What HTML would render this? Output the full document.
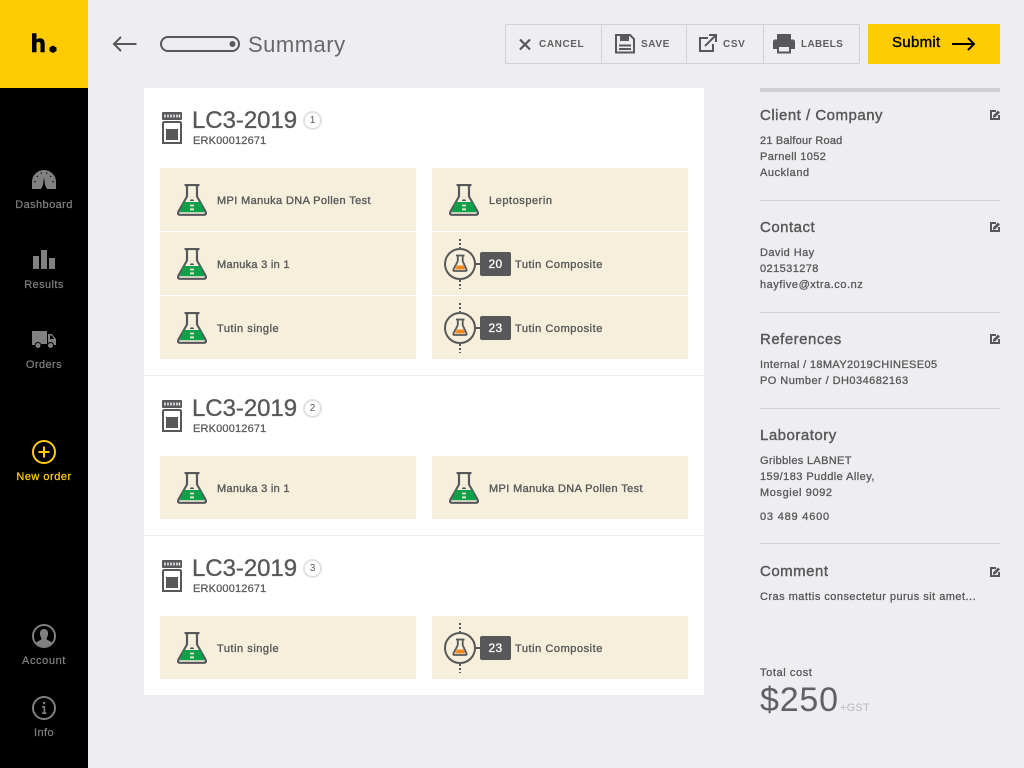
<!DOCTYPE html>
<html><head><meta charset="utf-8"><style>
html,body{margin:0;padding:0;width:1024px;height:768px;overflow:hidden;background:#eeeef0;font-family:"Liberation Sans",sans-serif;color:#58585a}
div{position:absolute;white-space:nowrap}
svg{position:absolute;overflow:visible}
.n{width:88px;left:0;text-align:center;font-size:11px;line-height:14px;color:#808082;letter-spacing:.42px;margin-top:1px;-webkit-text-stroke:.2px #808082}
.tile{background:#f5efdc;width:256px;height:63px}
.t{font-size:11px;line-height:14px;margin-top:1px;-webkit-text-stroke:.35px #58585a}
.h{font-size:24px;line-height:28px;letter-spacing:-.05px;margin-top:1px;-webkit-text-stroke:.35px #58585a}
.erk{font-size:11px;line-height:14px;letter-spacing:.17px;margin-top:1px;-webkit-text-stroke:.25px #58585a}
.badge{width:15px;height:15px;border:2px solid #e2e2e2;border-radius:50%;font-size:10px;line-height:15px;text-align:center;color:#58585a}
.num{width:31px;height:24px;background:#58585a;border-radius:2px;color:#fff;font-size:12px;line-height:24px;text-align:center;-webkit-text-stroke:.3px #fff;letter-spacing:.3px}
.tb{font-size:10px;line-height:14px;font-weight:bold;letter-spacing:.6px;color:#606062;margin-top:1px}
.sh{font-size:15px;line-height:20px;left:760px;letter-spacing:.5px;margin-top:1px;-webkit-text-stroke:.4px #58585a}
.st{font-size:11px;line-height:16px;left:760px;margin-top:1px;-webkit-text-stroke:.3px #58585a}
.hr{left:760px;width:240px;height:1px;background:#cfcfd1}
</style></head><body>
<svg width="0" height="0" style="position:absolute"><defs>
<symbol id="fl" viewBox="0 0 31 33">
<path d="M7.500 1H22.500M10 1V12.500L1.500 27.500Q.2 30.800 3 30.800H27Q29.800 30.800 28.500 27.500L20 12.500V1" fill="none" stroke="#58585a" stroke-width="2.200" stroke-linejoin="round"/>
<path d="M6.500 18H23.500L27.500 28.300H2.500Z" fill="#0e9f4a"/>
<rect x="13" y="15.500" width="4" height="1.500" fill="#58585a"/>
<rect x="13" y="20.600" width="4" height="1.800" fill="#f5efdc"/><rect x="13" y="24.500" width="4" height="1.800" fill="#f5efdc"/>
</symbol>
<symbol id="cf" viewBox="0 0 38 54">
<path d="M16 2V11M16 43V52" stroke="#58585a" stroke-width="2" stroke-dasharray="2 2" fill="none"/>
<circle cx="16" cy="27" r="15" fill="none" stroke="#58585a" stroke-width="2"/>
<path d="M12 18.500H20.500M13.800 18.500V24L9.500 32.500Q9 34 10.500 34H21.500Q23 34 22.500 32.500L18.700 24V18.500" fill="none" stroke="#58585a" stroke-width="1.800"/>
<path d="M13 28.500H19.500L21.200 32.500H11.300Z" fill="#f08a1d"/>
<path d="M31 27H37" stroke="#58585a" stroke-width="2"/>
</symbol>
<symbol id="jar" viewBox="0 0 20 32">
<rect x="0" y="0" width="20" height="8" rx="1" fill="#58585a"/>
<path d="M3 2.500V5.500M6 2.500V5.500M9 2.500V5.500M12 2.500V5.500M15 2.500V5.500M17.500 2.500V5.500" stroke="#fff" stroke-width="1.400"/>
<path d="M1 11.500Q1 10 2.500 10H17.500Q19 10 19 11.500V31H1Z" fill="none" stroke="#58585a" stroke-width="2"/>
<rect x="4" y="17" width="12" height="11" fill="#58585a"/>
</symbol>
<symbol id="ed" viewBox="0 0 10 10">
<path d="M6 1H1V9H9V5" fill="none" stroke="#58585a" stroke-width="2"/>
<path d="M3 5.500L8 .5L10 2.500L5 7.500H3Z" fill="#58585a"/>
</symbol>
</defs></svg>

<div style="left:0;top:0;width:88px;height:768px;background:#000"></div>
<div style="left:0;top:0;width:88px;height:88px;background:#ffcc03"></div>
<svg style="left:0;top:0" width="88" height="88"><path d="M32 33.300H36.500V39.500Q38 38.300 40 38.300Q44.700 38.300 44.700 43.500V52.300H40.500V44.500Q40.500 42 38.500 42Q37 42 36.500 43V52.300H32Z" fill="#000"/><path d="M53 45.500L56.500 47.500V51L53 53L49.500 51V47.500Z" fill="#000"/></svg>

<svg style="left:32px;top:170px" width="24" height="19" viewBox="0 0 24 19"><path d="M0 19V12A12 12 0 0 1 24 12V19Z" fill="#808082"/><path d="M12 7L13 15L15 19H9L11 15Z" fill="#000"/><path d="M2.200 11.500L3.700 12M4.700 5.800L5.800 6.900M9 2.400L9.400 3.800M15 2.400L14.600 3.800M19.300 5.800L18.200 6.900M21.800 11.500L20.300 12" stroke="#000" stroke-width="1"/></svg>
<div class="n" style="top:197px">Dashboard</div>
<svg style="left:33px;top:250px" width="22" height="20"><path d="M0 6H6V19H0ZM8 0H14V19H8ZM16 8H22V19H16Z" fill="#808082"/></svg>
<div class="n" style="top:277px">Results</div>
<svg style="left:32px;top:331px" width="24" height="18"><path d="M0 0H15V13H0ZM16 3H20L24 8V14H16Z" fill="#808082"/><path d="M18 4.500H20L22 8H18Z" fill="#000"/><circle cx="6" cy="14.500" r="3" fill="#808082" stroke="#000"/><circle cx="18.500" cy="14.500" r="3" fill="#808082" stroke="#000"/><rect x="0" y="12" width="3" height="2" fill="#808082"/></svg>
<div class="n" style="top:357px">Orders</div>
<svg style="left:32px;top:440px" width="24" height="24"><circle cx="12" cy="12" r="11" fill="none" stroke="#ffcc03" stroke-width="2"/><path d="M12 6.500V17.500M6.500 12H17.500" stroke="#ffcc03" stroke-width="2"/></svg>
<div class="n" style="top:469px;color:#ffcc03;-webkit-text-stroke:.25px #ffcc03;letter-spacing:.5px">New order</div>
<svg style="left:32px;top:624px" width="24" height="24"><circle cx="12" cy="12" r="11" fill="none" stroke="#808082" stroke-width="2"/><path d="M12 5C15 5 16.500 7.500 16 10.500C15.700 12.500 14.500 14 14.500 15C14.500 16 19 17 20 19A11 11 0 0 1 4 19C5 17 9.500 16 9.500 15C9.500 14 8.300 12.500 8 10.500C7.500 7.500 9 5 12 5Z" fill="#808082"/></svg>
<div class="n" style="top:653px;letter-spacing:.6px">Account</div>
<svg style="left:32px;top:696px" width="24" height="24"><circle cx="12" cy="12" r="11" fill="none" stroke="#808082" stroke-width="2"/><rect x="11" y="6" width="2.200" height="2.200" fill="#808082"/><path d="M10 10.800H12.400V17M10 17.200H14.500" stroke="#808082" stroke-width="1.600" fill="none"/></svg>
<div class="n" style="top:725px">Info</div>

<svg style="left:112px;top:34px" width="26" height="20"><path d="M24.500 10H2M9 3L2 10L9 17" fill="none" stroke="#58585a" stroke-width="2"/></svg>
<svg style="left:160px;top:36px" width="80" height="16"><rect x="1" y="1" width="78" height="14" rx="7" fill="none" stroke="#58585a" stroke-width="2"/><circle cx="72.500" cy="8" r="3" fill="#58585a"/></svg>
<div style="left:248px;top:31px;font-size:22px;line-height:28px;letter-spacing:.5px;color:#68686a">Summary</div>

<div style="left:505px;top:24px;width:353px;height:38px;border:1px solid #d2d2d4;border-radius:1px"></div>
<div style="left:601px;top:25px;width:1px;height:38px;background:#d2d2d4"></div>
<div style="left:686px;top:25px;width:1px;height:38px;background:#d2d2d4"></div>
<div style="left:763px;top:25px;width:1px;height:38px;background:#d2d2d4"></div>
<svg style="left:519px;top:38px" width="12" height="12"><path d="M1 1.500L11 11.500M11 1.500L1 11.500" stroke="#58585a" stroke-width="2.200"/></svg>
<div class="tb" style="left:539px;top:37px">CANCEL</div>
<svg style="left:615px;top:34px" width="20" height="20"><path d="M1 1H15L19 5V18.500H1Z" fill="none" stroke="#58585a" stroke-width="2"/><rect x="5" y="1" width="9" height="6" fill="#58585a"/><path d="M4 11.500H16M4 15H16" stroke="#58585a" stroke-width="2"/></svg>
<div class="tb" style="left:641px;top:37px">SAVE</div>
<svg style="left:699px;top:34px" width="18" height="18"><path d="M9 4H1V17H14V10" fill="none" stroke="#58585a" stroke-width="2"/><path d="M6 12L16 2M10 1H17V8" fill="none" stroke="#58585a" stroke-width="2"/></svg>
<div class="tb" style="left:723px;top:37px">CSV</div>
<svg style="left:773px;top:34px" width="22" height="20"><path d="M4 0H18V6H4ZM2 5.500H20Q22 5.500 22 8V15H18V11H4V15H0V8Q0 5.500 2 5.500Z" fill="#58585a"/><path d="M5 12H17V18.500H5Z" fill="#eeeef0" stroke="#58585a" stroke-width="2"/></svg>
<div class="tb" style="left:801px;top:37px;letter-spacing:.35px">LABELS</div>

<div style="left:868px;top:24px;width:132px;height:40px;background:#ffcc03;border-radius:1px"></div>
<div style="left:892px;top:34px;font-size:15px;line-height:18px;color:#000;letter-spacing:.3px;-webkit-text-stroke:.4px #000">Submit</div>
<svg style="left:952px;top:36px" width="24" height="16"><path d="M0 8H22M16 2L22 8L16 14" fill="none" stroke="#000" stroke-width="2"/></svg>

<div style="left:144px;top:88px;width:560px;height:607px;background:#fff"></div>
<div style="left:144px;top:375px;width:560px;height:1px;background:#eeeef0"></div>
<div style="left:144px;top:535px;width:560px;height:1px;background:#eeeef0"></div>

<!-- group 1 -->
<svg style="left:162px;top:112px" width="20" height="32"><use href="#jar" width="20" height="32"/></svg>
<div class="h" style="left:192px;top:106px">LC3-2019</div>
<div class="badge" style="left:303px;top:111px">1</div>
<div class="erk" style="left:193px;top:133px">ERK00012671</div>
<div class="tile" style="left:160px;top:168px"></div>
<div class="tile" style="left:160px;top:232px"></div>
<div class="tile" style="left:160px;top:296px"></div>
<div class="tile" style="left:432px;top:168px"></div>
<div class="tile" style="left:432px;top:232px"></div>
<div class="tile" style="left:432px;top:296px"></div>
<svg style="left:177px;top:184px" width="31" height="33"><use href="#fl" width="31" height="33"/></svg>
<div class="t" style="left:217px;top:193px;letter-spacing:.38px">MPI Manuka DNA Pollen Test</div>
<svg style="left:177px;top:248px" width="31" height="33"><use href="#fl" width="31" height="33"/></svg>
<div class="t" style="left:217px;top:257px;letter-spacing:.28px">Manuka 3 in 1</div>
<svg style="left:177px;top:312px" width="31" height="33"><use href="#fl" width="31" height="33"/></svg>
<div class="t" style="left:217px;top:321px;letter-spacing:.53px">Tutin single</div>
<svg style="left:449px;top:184px" width="31" height="33"><use href="#fl" width="31" height="33"/></svg>
<div class="t" style="left:489px;top:193px;letter-spacing:.55px">Leptosperin</div>
<svg style="left:444px;top:237px" width="38" height="54"><use href="#cf" width="38" height="54"/></svg>
<div class="num" style="left:480px;top:252px">20</div>
<div class="t" style="left:515px;top:257px;letter-spacing:.55px">Tutin Composite</div>
<svg style="left:444px;top:301px" width="38" height="54"><use href="#cf" width="38" height="54"/></svg>
<div class="num" style="left:480px;top:316px">23</div>
<div class="t" style="left:515px;top:321px;letter-spacing:.55px">Tutin Composite</div>

<!-- group 2 -->
<svg style="left:162px;top:400px" width="20" height="32"><use href="#jar" width="20" height="32"/></svg>
<div class="h" style="left:192px;top:394px">LC3-2019</div>
<div class="badge" style="left:303px;top:399px">2</div>
<div class="erk" style="left:193px;top:421px">ERK00012671</div>
<div class="tile" style="left:160px;top:456px"></div>
<div class="tile" style="left:432px;top:456px"></div>
<svg style="left:177px;top:472px" width="31" height="33"><use href="#fl" width="31" height="33"/></svg>
<div class="t" style="left:217px;top:481px;letter-spacing:.28px">Manuka 3 in 1</div>
<svg style="left:449px;top:472px" width="31" height="33"><use href="#fl" width="31" height="33"/></svg>
<div class="t" style="left:489px;top:481px;letter-spacing:.38px">MPI Manuka DNA Pollen Test</div>

<!-- group 3 -->
<svg style="left:162px;top:560px" width="20" height="32"><use href="#jar" width="20" height="32"/></svg>
<div class="h" style="left:192px;top:554px">LC3-2019</div>
<div class="badge" style="left:303px;top:559px">3</div>
<div class="erk" style="left:193px;top:581px">ERK00012671</div>
<div class="tile" style="left:160px;top:616px"></div>
<div class="tile" style="left:432px;top:616px"></div>
<svg style="left:177px;top:632px" width="31" height="33"><use href="#fl" width="31" height="33"/></svg>
<div class="t" style="left:217px;top:641px;letter-spacing:.53px">Tutin single</div>
<svg style="left:444px;top:621px" width="38" height="54"><use href="#cf" width="38" height="54"/></svg>
<div class="num" style="left:480px;top:636px">23</div>
<div class="t" style="left:515px;top:641px;letter-spacing:.55px">Tutin Composite</div>

<!-- sidebar -->
<div style="left:760px;top:88px;width:240px;height:4px;background:#cfcfd1"></div>
<div class="sh" style="top:105px">Client / Company</div>
<svg style="left:990px;top:110px" width="10" height="10"><use href="#ed" width="10" height="10"/></svg>
<div class="st" style="top:132px;letter-spacing:.2px">21 Balfour Road</div>
<div class="st" style="top:148px;letter-spacing:.37px">Parnell 1052</div>
<div class="st" style="top:164px;letter-spacing:.55px">Auckland</div>
<div class="hr" style="top:200px"></div>
<div class="sh" style="top:217px">Contact</div>
<svg style="left:990px;top:222px" width="10" height="10"><use href="#ed" width="10" height="10"/></svg>
<div class="st" style="top:244px;letter-spacing:.42px">David Hay</div>
<div class="st" style="top:260px;letter-spacing:.42px">021531278</div>
<div class="st" style="top:276px;letter-spacing:.53px">hayfive@xtra.co.nz</div>
<div class="hr" style="top:312px"></div>
<div class="sh" style="top:329px">References</div>
<svg style="left:990px;top:334px" width="10" height="10"><use href="#ed" width="10" height="10"/></svg>
<div class="st" style="top:356px;letter-spacing:.37px">Internal / 18MAY2019CHINESE05</div>
<div class="st" style="top:372px;letter-spacing:.45px">PO Number / DH034682163</div>
<div class="hr" style="top:408px"></div>
<div class="sh" style="top:425px">Laboratory</div>
<div class="st" style="top:452px;letter-spacing:.33px">Gribbles LABNET</div>
<div class="st" style="top:468px;letter-spacing:.44px">159/183 Puddle Alley,</div>
<div class="st" style="top:484px;letter-spacing:.6px">Mosgiel 9092</div>
<div class="st" style="top:508px;letter-spacing:.8px">03 489 4600</div>
<div class="hr" style="top:543px"></div>
<div class="sh" style="top:561px">Comment</div>
<svg style="left:990px;top:567px" width="10" height="10"><use href="#ed" width="10" height="10"/></svg>
<div class="st" style="top:588px;letter-spacing:.47px">Cras mattis consectetur purus sit amet...</div>
<div class="st" style="top:664px;letter-spacing:.6px">Total cost</div>
<div style="left:760px;top:680px;font-size:34px;line-height:40px;letter-spacing:.8px;color:#616163">$250</div>
<div style="left:840px;top:701px;font-size:11px;line-height:14px;color:#b9b9bb;letter-spacing:.2px">+GST</div>
</body></html>
